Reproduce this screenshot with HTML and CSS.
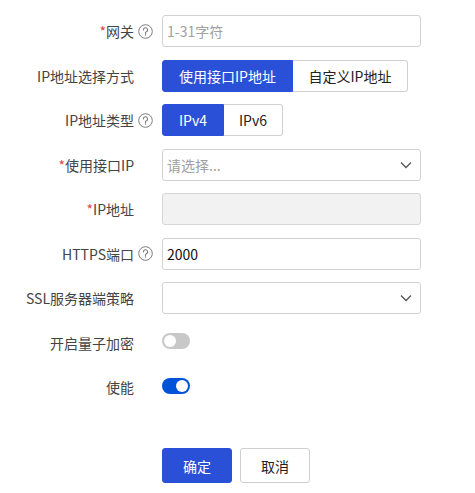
FILE: index.html
```html
<!DOCTYPE html>
<html lang="zh-CN">
<head>
<meta charset="utf-8">
<link rel="stylesheet" href="styles.css">
</head>
<body>
<form class="form">
  <div class="row">
    <label class="label"><span class="req">*</span>网关</label>
    <span class="help"><svg viewBox="0 0 15 15" width="15" height="15"><circle cx="7.5" cy="7.5" r="6.8" fill="none" stroke="#7d7d7d" stroke-width="1"/><path d="M5.4 5.9a2.1 2.1 0 1 1 3 1.9c-.6.3-.9.7-.9 1.3v.6" fill="none" stroke="#7d7d7d" stroke-width="1.1" stroke-linecap="round"/><circle cx="7.5" cy="11" r=".7" fill="#7d7d7d"/></svg></span>
    <div class="ctrl"><input class="input" placeholder="1-31字符"></div>
  </div>
  <div class="row">
    <label class="label">IP地址选择方式</label>
    <span class="help"></span>
    <div class="ctrl">
      <div class="seg">
        <button type="button" class="seg-btn active w131">使用接口IP地址</button>
        <button type="button" class="seg-btn w115">自定义IP地址</button>
      </div>
    </div>
  </div>
  <div class="row">
    <label class="label">IP地址类型</label>
    <span class="help"><svg viewBox="0 0 15 15" width="15" height="15"><circle cx="7.5" cy="7.5" r="6.8" fill="none" stroke="#7d7d7d" stroke-width="1"/><path d="M5.4 5.9a2.1 2.1 0 1 1 3 1.9c-.6.3-.9.7-.9 1.3v.6" fill="none" stroke="#7d7d7d" stroke-width="1.1" stroke-linecap="round"/><circle cx="7.5" cy="11" r=".7" fill="#7d7d7d"/></svg></span>
    <div class="ctrl">
      <div class="seg">
        <button type="button" class="seg-btn active w62">IPv4</button>
        <button type="button" class="seg-btn w59">IPv6</button>
      </div>
    </div>
  </div>
  <div class="row">
    <label class="label"><span class="req">*</span>使用接口IP</label>
    <span class="help"></span>
    <div class="ctrl">
      <div class="select"><span class="placeholder">请选择...</span><svg class="chev" viewBox="0 0 12 8" width="12" height="8"><path d="M1 1.5l5 5 5-5" fill="none" stroke="#555" stroke-width="1.3"/></svg></div>
    </div>
  </div>
  <div class="row">
    <label class="label"><span class="req">*</span>IP地址</label>
    <span class="help"></span>
    <div class="ctrl"><input class="input disabled" disabled></div>
  </div>
  <div class="row">
    <label class="label">HTTPS端口</label>
    <span class="help"><svg viewBox="0 0 15 15" width="15" height="15"><circle cx="7.5" cy="7.5" r="6.8" fill="none" stroke="#7d7d7d" stroke-width="1"/><path d="M5.4 5.9a2.1 2.1 0 1 1 3 1.9c-.6.3-.9.7-.9 1.3v.6" fill="none" stroke="#7d7d7d" stroke-width="1.1" stroke-linecap="round"/><circle cx="7.5" cy="11" r=".7" fill="#7d7d7d"/></svg></span>
    <div class="ctrl"><input class="input" value="2000"></div>
  </div>
  <div class="row">
    <label class="label">SSL服务器端策略</label>
    <span class="help"></span>
    <div class="ctrl">
      <div class="select"><span class="placeholder"></span><svg class="chev" viewBox="0 0 12 8" width="12" height="8"><path d="M1 1.5l5 5 5-5" fill="none" stroke="#555" stroke-width="1.3"/></svg></div>
    </div>
  </div>
  <div class="row">
    <label class="label">开启量子加密</label>
    <span class="help"></span>
    <div class="ctrl"><span class="toggle"><span class="knob"></span></span></div>
  </div>
  <div class="row">
    <label class="label">使能</label>
    <span class="help"></span>
    <div class="ctrl"><span class="toggle on"><span class="knob"></span></span></div>
  </div>
  <div class="actions">
    <button type="button" class="btn primary">确定</button>
    <button type="button" class="btn">取消</button>
  </div>
</form>
</body>
</html>
```
FILE: styles.css
```css
* { box-sizing: border-box; }
body {
  margin: 0;
  background: #fff;
  font-family: "Noto Sans CJK SC", "Noto Sans", sans-serif;
  font-size: 14px;
  color: #444;
}
.form {
  padding-top: 15px;
  display: flex;
  flex-direction: column;
  gap: 12.5px;
}
.row {
  display: grid;
  grid-template-columns: 134px 28px 259px;
  height: 32px;
  align-items: center;
}
.label {
  text-align: right;
  white-space: nowrap;
  color: #444;
  line-height: 20px;
}
.req { color: #e0474c; }
.help {
  display: flex;
  align-items: center;
  padding-left: 4px;
  height: 15px;
}
.help svg { display: block; }
.ctrl { display: flex; align-items: center; height: 32px; }
.input {
  width: 259px;
  height: 32px;
  border: 1px solid #d2d2d2;
  border-radius: 3px;
  padding: 0 4px;
  font: inherit;
  font-size: 14px;
  color: #111;
  outline: none;
  background: #fff;
}
.input::placeholder { color: #a0a0a0; }
.input.disabled { background: #f2f2f2; border-color: #d6d6d6; }
.seg { display: flex; height: 32px; }
.seg-btn {
  height: 32px;
  border: 1px solid #d2d2d2;
  background: #fff;
  color: #222;
  font: inherit;
  padding: 0;
}
.seg-btn:first-child { border-radius: 3px 0 0 3px; }
.seg-btn:last-child { border-radius: 0 3px 3px 0; border-left: none; }
.seg-btn.active { background: #2b50d8; border-color: #2b50d8; color: #fff; }
.w131 { width: 131px; }
.w115 { width: 115px; }
.w62 { width: 62px; }
.w59 { width: 59px; }
.select {
  width: 259px;
  height: 32px;
  border: 1px solid #d2d2d2;
  border-radius: 3px;
  display: flex;
  align-items: center;
  justify-content: space-between;
  padding: 0 8px 0 4px;
}
.placeholder { color: #a0a0a0; }
.chev { display: block; }
.toggle {
  width: 28px;
  height: 16px;
  border-radius: 8px;
  background: #c8c8c8;
  display: flex;
  align-items: center;
  padding: 0 2px;
  margin-bottom: 3px;
}
.toggle.on { background: #0052d9; justify-content: flex-end; }
.knob {
  width: 12px;
  height: 12px;
  border-radius: 50%;
  background: #fff;
}
.actions {
  margin-top: 32.5px;
  padding-left: 162px;
  display: flex;
  gap: 8px;
}
.btn {
  width: 70px;
  height: 35px;
  border: 1px solid #cfcfcf;
  border-radius: 3px;
  background: #fff;
  color: #222;
  font: inherit;
  padding: 0;
}
.btn.primary { background: #2b50d8; border-color: #2b50d8; color: #fff; }
```
